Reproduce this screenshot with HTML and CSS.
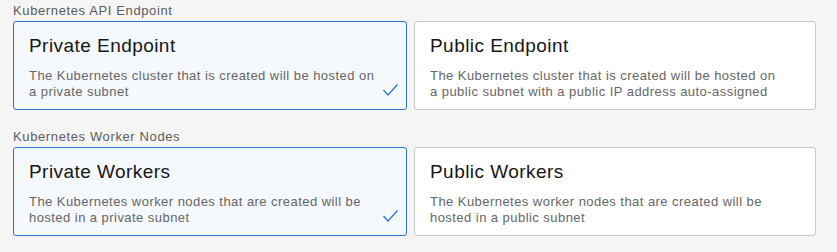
FILE: index.html
```html
<!DOCTYPE html>
<html lang="en">
<head>
  <meta charset="UTF-8">
  <title>Cluster Options</title>
  <link rel="stylesheet" href="styles.css">
</head>
<body>
  <div class="group">
    <div class="group-label">Kubernetes API Endpoint</div>
    <div class="options">
      <div class="option selected">
        <div class="option-title">Private Endpoint</div>
        <div class="option-desc">The Kubernetes cluster that is created will be hosted on a private subnet</div>
        <svg class="check" width="15" height="12" viewBox="0 0 15 12"><path d="M0.5 6 L5 11 L14.5 0.5" fill="none" stroke="#2a72cf" stroke-width="1.2"/></svg>
      </div>
      <div class="option">
        <div class="option-title">Public Endpoint</div>
        <div class="option-desc">The Kubernetes cluster that is created will be hosted on a public subnet with a public IP address auto-assigned</div>
      </div>
    </div>
  </div>

  <div class="group">
    <div class="group-label">Kubernetes Worker Nodes</div>
    <div class="options">
      <div class="option selected">
        <div class="option-title">Private Workers</div>
        <div class="option-desc">The Kubernetes worker nodes that are created will be hosted in a private subnet</div>
        <svg class="check" width="15" height="12" viewBox="0 0 15 12"><path d="M0.5 6 L5 11 L14.5 0.5" fill="none" stroke="#2a72cf" stroke-width="1.2"/></svg>
      </div>
      <div class="option">
        <div class="option-title">Public Workers</div>
        <div class="option-desc">The Kubernetes worker nodes that are created will be hosted in a public subnet</div>
      </div>
    </div>
  </div>
</body>
</html>
```

FILE: styles.css
```css
body {
  margin: 0;
  padding: 3px 0 0 13px;
  background-color: #f5f5f5;
  font-family: "Liberation Sans", Arial, sans-serif;
  color: #161616;
}

.group {
  margin-bottom: 19px;
}

.group-label {
  font-size: 13px;
  line-height: 16px;
  letter-spacing: 0.62px;
  color: #5c5c5c;
  margin-bottom: 2px;
}

.options {
  display: grid;
  grid-template-columns: 394px 402px;
  column-gap: 7px;
}

.option {
  position: relative;
  box-sizing: border-box;
  height: 89px;
  padding: 12px 15px 0 15px;
  background-color: #fff;
  border: 1px solid #c6c8cc;
  border-radius: 3px;
}

.option.selected {
  background-color: #f5f8fd;
  border-color: #2a72cf;
}

.option-title {
  font-size: 19px;
  line-height: 24px;
  letter-spacing: 0.45px;
  margin-bottom: 10px;
}

.option-desc {
  max-width: 352px;
  font-size: 13px;
  line-height: 16px;
  letter-spacing: 0.45px;
  color: #666;
}

.check {
  position: absolute;
  right: 8px;
  bottom: 13px;
}
```
